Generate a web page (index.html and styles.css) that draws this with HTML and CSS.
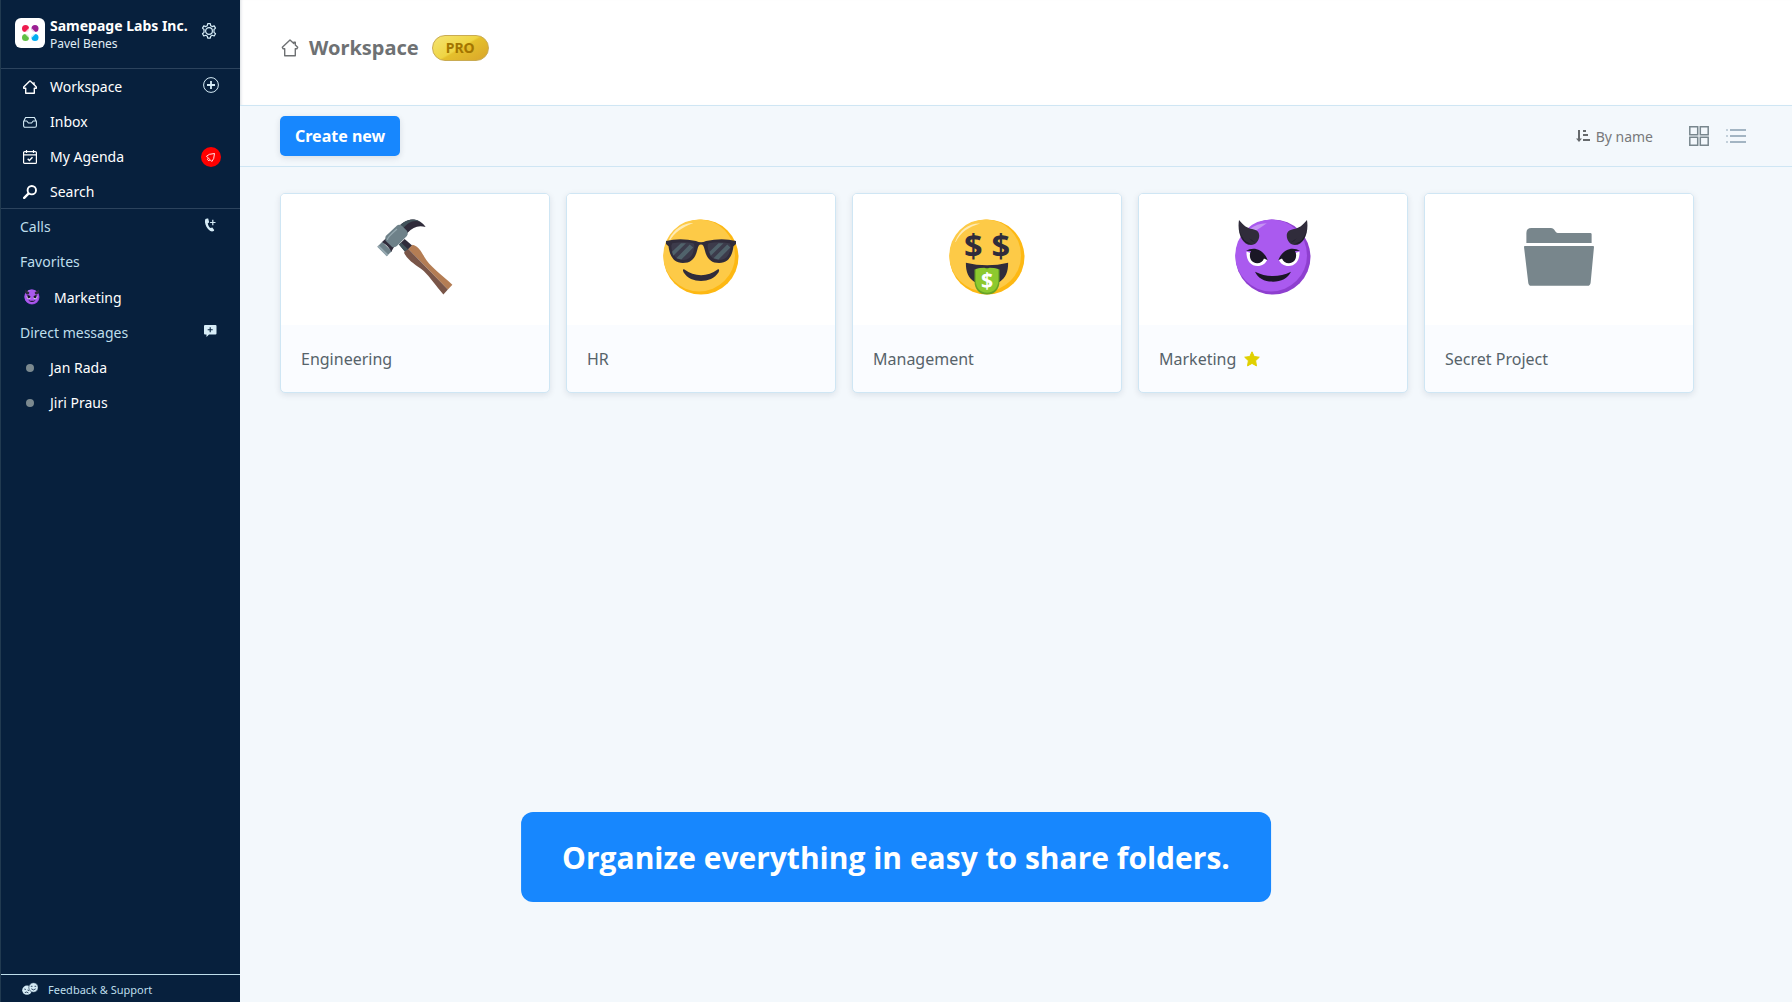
FILE: index.html
```html
<!DOCTYPE html>
<html lang="en">
<head>
    <meta charset="UTF-8">
    <meta name="viewport" content="width=device-width, initial-scale=1.0">
    <title>Samepage - Workspace</title>
    <link rel="stylesheet" href="styles.css">
</head>
<body>
    <aside class="sidebar">
        <div class="account">
            <div class="logo">
                <svg viewBox="0 0 30 30" width="30" height="30">
                    <circle cx="10.5" cy="10.5" r="3.5" fill="#ee1c4e"/>
                    <circle cx="20" cy="10.5" r="3.5" fill="#9c1f93"/>
                    <circle cx="10.5" cy="19.5" r="3.5" fill="#5fc044"/>
                    <circle cx="20" cy="19.5" r="3.5" fill="#00adf2"/>
                    <path d="M12 12l2-2v4h-4zM18.500 12l-2-2v4h4zM12 18l2 2v-4h-4zM18.500 18l-2 2v-4h4z" fill="#fff" opacity=".8"/>
                </svg>
            </div>
            <div class="account-names">
                <strong>Samepage Labs Inc.</strong>
                <span>Pavel Benes</span>
            </div>
            <button class="icon-btn" aria-label="Settings">
                <svg viewBox="0 0 16 16" width="16" height="16" fill="none" stroke="#d6ecf7" stroke-width="1.200" stroke-linejoin="round">
                    <path d="M6.700.7h2.600l.4 2 1.500.9 2-.7 1.300 2.200-1.500 1.400v2.900l1.500 1.400-1.300 2.200-2-.7-1.500.9-.4 2H6.700l-.4-2-1.500-.9-2 .7-1.300-2.200L3 9.400V6.500L1.500 5.100l1.300-2.200 2 .7 1.500-.9z"/>
                    <circle cx="8" cy="8" r="3.400"/>
                </svg>
            </button>
        </div>

        <nav class="menu">
            <div class="row">
                <a href="#">
                    <svg viewBox="0 0 14 14" width="14" height="14" fill="none" stroke="#fff" stroke-width="1.400" stroke-linejoin="round"><path d="M7 .8L.7 7v1.200h2v5h8.600v-5h2V7L11 4.600V2.300"/><path d="M7 .8l4.200 4"/></svg>
                    Workspace
                </a>
                <button class="icon-btn add" aria-label="Add to workspace">
                    <svg viewBox="0 0 16 16" width="16" height="16" fill="none" stroke="#d6ecf7"><circle cx="8" cy="8" r="7.400"/><path d="M8 4v8M4 8h8" stroke-width="1.800"/></svg>
                </button>
            </div>
            <div class="row">
                <a href="#">
                    <svg viewBox="0 0 14 14" width="14" height="14" fill="none" stroke="#d6ecf7" stroke-width="1.100" stroke-linejoin="round"><path d="M.6 6.500l2-4h8.800l2 4v4.300a1.400 1.400 0 0 1-1.400 1.400H2A1.400 1.400 0 0 1 .6 10.800zM.6 6h3.200l1.600 2h3.200l1.600-2h3.200"/></svg>
                    Inbox
                </a>
            </div>
            <div class="row">
                <a href="#">
                    <svg viewBox="0 0 14 14" width="14" height="14" fill="none" stroke="#fff" stroke-width="1.200"><rect x=".6" y="1.600" width="12.800" height="11.800" rx="1"/><path d="M.6 4.800h12.800M3.500 0v3M10.500 0v3"/><path d="M4.700 8.800l1.700 1.700 3.100-3.200" stroke-width="1.500"/></svg>
                    My Agenda
                </a>
                <span class="alert">
                    <svg viewBox="0 0 20 20" width="20" height="20" fill="none" stroke="#fff" stroke-width=".9" stroke-linejoin="round"><path d="M13.500 6.500l-5 .8-3 1.900 5.300 5.300 1.900-3z"/><path d="M6.700 11.500a1.500 1.500 0 0 0 2 2"/></svg>
                </span>
            </div>
            <div class="row">
                <a href="#">
                    <svg viewBox="0 0 14 14" width="14" height="14" fill="none" stroke="#fff" stroke-linecap="round"><circle cx="8.800" cy="5.200" r="4.200" stroke-width="1.900"/><path d="M5.400 8.600L1.200 12.800" stroke-width="2.400"/></svg>
                    Search
                </a>
            </div>
        </nav>

        <div class="groups">
            <div class="row group">
                <span>Calls</span>
                <button class="icon-btn" aria-label="New call">
                    <svg viewBox="0 0 14 14" width="14" height="14"><path d="M4.200.4L2.400 1C.6 5 4.500 12.500 9 13.600l1.800-.6.4-.9-1.900-2.600-1.800.5C6 9.200 4.900 6.900 4.800 5.200l1.400-.8L5.200.6z" fill="#d6ecf7"/><path d="M9.800 1.800v5.400M7.100 4.500h5.400" stroke="#d6ecf7" stroke-width="1.200"/></svg>
                </button>
            </div>
            <div class="row group">
                <span>Favorites</span>
            </div>
            <div class="row favorite">
                <a href="#">
                    <svg viewBox="0 0 64 64" width="16" height="16"><use href="#devil"/></svg>
                    Marketing
                </a>
            </div>
            <div class="row group">
                <span>Direct messages</span>
                <button class="icon-btn" aria-label="New message">
                    <svg viewBox="0 0 14 14" width="14" height="14"><path d="M2 1h10.500q1 0 1 1v7.500q0 1-1 1H6L3.500 13v-2.500H2q-1 0-1-1V2q0-1 1-1z" fill="#d6ecf7"/><path d="M7.200 3.200v5M4.700 5.700h5" stroke="#07203d" stroke-width="1.100"/></svg>
                </button>
            </div>
            <div class="row">
                <a href="#"><span class="status"></span>Jan Rada</a>
            </div>
            <div class="row">
                <a href="#"><span class="status"></span>Jiri Praus</a>
            </div>
        </div>

        <a class="support" href="#">
            <svg viewBox="0 0 16 14" width="16" height="14">
                <ellipse cx="5" cy="8.200" rx="4.800" ry="4.600" fill="#d6ecf7"/>
                <path d="M2.300 7l1.600.5M5.500 8l1.600.6M2.800 10.700q1.800-1.500 3.600.2" stroke="#07203d" fill="none" stroke-width=".8"/>
                <ellipse cx="11.500" cy="5.500" rx="4.700" ry="4.800" fill="#d6ecf7" stroke="#07203d" stroke-width=".6"/>
                <path d="M8.800 4.300h1.700M12.500 4.300h1.700M9.300 6.800q2.200 2.200 4.400 0" stroke="#07203d" fill="none" stroke-width=".8"/>
            </svg>
            Feedback &amp; Support
        </a>
    </aside>

    <main class="main">
        <header class="header">
            <svg viewBox="0 0 18 18" width="18" height="18" fill="none" stroke="#6e7173" stroke-width="1.400" stroke-linejoin="round"><path d="M9 1L1.300 8.300l.7 1.400h1.700v7.100h10.600V9.700H16l.7-1.400L14.300 6V3.200h-1.500v1.400z"/></svg>
            <h1>Workspace</h1>
            <span class="pro">PRO</span>
        </header>

        <div class="toolbar">
            <button class="create">Create new</button>
            <div class="view-options">
                <button class="sort">
                    <svg viewBox="0 0 14 12" width="14" height="12" fill="none" stroke="#65696c" stroke-width="2"><path d="M3 0v10M7 1h3M7 5h5M7 10h7"/><path d="M0 8.500h6L3 12z" fill="#65696c" stroke="none"/></svg>
                    By name
                </button>
                <button class="icon-btn" aria-label="Grid view">
                    <svg viewBox="0 0 20 20" width="20" height="20" fill="none" stroke="#78868d" stroke-width="1.500"><path d="M.8.8h7.900v7.900H.8zM11.300.8h7.900v7.900h-7.900zM.8 11.300h7.900v7.900H.8zM11.300 11.300h7.900v7.900h-7.900z"/></svg>
                </button>
                <button class="icon-btn" aria-label="List view">
                    <svg viewBox="0 0 20 20" width="20" height="20" fill="none" stroke="#a3b5c3" stroke-width="2"><path d="M4 4h16M4 10h16M4 16h16"/><path d="M0 4h2M0 10h2M0 16h2" opacity=".6"/></svg>
                </button>
            </div>
        </div>

        <section class="folders">
            <a class="card" href="#">
                <div class="picture">
                    <svg viewBox="0 0 64 64" width="80" height="80">
                        <path d="M1.900 23.700l3.900-4 7.600 7.600-4 4z" fill="#6e8189"/>
                        <path d="M1.900 23.700l1.200-1.200 7.500 7.500-1.200 1.300z" fill="#94a7af"/>
                        <path d="M5.600 20l3-2.800 6.600 6.800-2.300 4q-1.200-4-7.300-8z" fill="#302c3b"/>
                        <path d="M20 6.600C25 1.600 34-1 40.500 8 34.500 6.500 30.500 8 25.900 12.700z" fill="#302c3b"/>
                        <path d="M20 6.600C24.500 2 31.500.2 36.500 4 30.500 1.600 26.500 4.500 22.800 8.600z" fill="#42535b"/>
                        <path d="M19.200 21.900l4.500-4.300 6 5.200-5.400 5.400z" fill="#302c3b"/>
                        <path d="M19.200 21.900l1.600-1.600 5.600 5.500-2.100 2.200z" fill="#42535b"/>
                        <path d="M8.600 15.200l8.800-8.300q2-1.400 4.300.3l4 4q1 2-.2 4l-8 8q-1.800 1.400-3.600 1L8.500 19q-.8-2 .1-3.800z" fill="#6e8189"/>
                        <path d="M9.800 18.300q0-2 7.800-8.700" stroke="#94a7af" stroke-width="1" fill="none"/>
                        <path d="M30.100 22.100c5 1.500 7 5.400 9.400 9.900 3.800 7 14 14.500 22.400 22.100l-3.600 3.900L26.700 25.600z" fill="#b47d54"/>
                        <path d="M26.700 25.600l31.600 32.400-3.600 3.900C49 55.500 44 48 39 43.200c-6-5-11.500-7-15.600-14.200v-1z" fill="#795548"/>
                    </svg>
                </div>
                <div class="name">Engineering</div>
            </a>
            <a class="card" href="#">
                <div class="picture">
                    <svg viewBox="0 0 64 64" width="80" height="80">
                        <circle cx="32" cy="32" r="30" fill="#fdb813"/>
                        <ellipse cx="30.500" cy="30.700" rx="28.700" ry="28.800" fill="#fdca47"/>
                        <path d="M6.500 18C10 10 18 4.800 25.500 4.900 17 8 10.500 12.500 7 19z" fill="#feebb5"/>
                        <path d="M4 19.200q11-3 24 0 2 1 4 1t4-1q13-3 24 0v2.400l-2 1.700c-1 7-3.500 13.500-11.500 13.500-7 0-10-4-11.500-10.500-.8-3-1.300-4.300-3-4.300s-2.200 1.300-3 4.300C27.500 32.800 24.500 36.800 17.500 36.800 9.500 36.800 7 30.300 6 23.300l-2-1.700z" fill="#302c3b"/>
                        <path d="M9 21q9-1.800 16.800 0 1.500.6.500 5-1.300 8-8.500 8.300Q9 34.500 8.200 23zM55 21q-9-1.800-16.800 0-1.500.6-.5 5 1.300 8 8.500 8.300Q55 34.500 55.800 23z" fill="#3c3b4b"/>
                        <path d="M16 21h4L9.800 31l-1-3.300zM23 22l2.800 2.400-9.500 9.600-4-1zM46 21h4L39.800 31l-1-3.300zM53 22l2.500 2.400-9.500 9.600-4-1z" fill="#50626b"/>
                        <path d="M18.100 41.600q14 10 27.800 0 1.200.6.200 2.600C43 49 37.500 51.200 32 51.200S21 49 18 44.200q-1-2 .1-2.600z" fill="#302c3b"/>
                    </svg>
                </div>
                <div class="name">HR</div>
            </a>
            <a class="card" href="#">
                <div class="picture">
                    <svg viewBox="0 0 64 64" width="80" height="80">
                        <circle cx="32" cy="32" r="30" fill="#fdb813"/>
                        <ellipse cx="30.500" cy="30.700" rx="28.700" ry="28.800" fill="#fdca47"/>
                        <path d="M6.500 20C10 10 18 4.800 26.500 5.200 17 8 10.500 12.500 7 20z" fill="#feebb5"/>
                        <path d="M15.100 36.600q17 4 33.800 0C49 44 47 48.500 42 52H22c-5-3.500-7-8-6.900-15.400z" fill="#302c3b"/>
                        <path d="M22 42q4-1.500 10-1.200 6-.3 10 1.200v9.500c0 6-4 10.500-10 10.500s-10-4.500-10-10.500z" fill="#68a324"/>
                        <path d="M23 41.500q3.500-1 7-1l2 1.500 2-1.500q3.500 0 7 1v9c0 6-3.500 10-9 10s-9-4-9-10z" fill="#8dc92e"/>
                        <g font-weight="bold" text-anchor="middle">
                            <text x="21" y="33" font-size="26" fill="#302c3b">$</text>
                            <text x="43" y="33" font-size="26" fill="#302c3b">$</text>
                            <text x="32" y="56.500" font-size="17" fill="#fff">$</text>
                        </g>
                    </svg>
                </div>
                <div class="name">Management</div>
            </a>
            <a class="card" href="#">
                <div class="picture">
                    <svg viewBox="0 0 64 64" width="80" height="80">
                        <g id="devil">
                            <circle cx="32" cy="32" r="30" fill="#8e3fcf"/>
                            <ellipse cx="30.500" cy="30.700" rx="28.700" ry="28.800" fill="#aa5aef"/>
                            <path d="M13 10q6-5 14-5-4 3-9 6z" fill="#c592f4"/>
                            <path d="M4.800 2.300c4 4.700 6.500 6.500 10.500 7.300 4 .7 5.700 2.400 5.700 5.400 0 4-3 7.400-6.500 7.400C7 22.400 3.200 12 4.800 2.300zM59.200 2.300c-4 4.700-6.500 6.500-10.500 7.300-4 .7-5.700 2.400-5.700 5.400 0 4 3 7.400 6.500 7.400 7.500 0 11.300-10.400 9.700-20.100z" fill="#302c3b"/>
                            <path d="M4.800 10q3 10.500 9.500 11.300-6.500 1-9.500-11.300zM59.200 10q-3 10.500-9.500 11.300 6.500 1 9.500-11.300zM13 17q2 2.500 5 3.500M51 17q-2 2.500-5 3.500" fill="#1a1725"/>
                            <path d="M10.800 27.500c-.4 7 3.200 11.700 8.700 11.700 4 0 6.500-1.800 8-5.200zM53.200 27.500c.4 7-3.200 11.700-8.700 11.700-4 0-6.500-1.800-8-5.200z" fill="#fff"/>
                            <path d="M10.400 27c5.500-3 13.500-2.300 17.400 7.600l-3-1.500c-.8 2.500-3 3.900-5.500 3.900-3.600 0-5.800-3-5.800-6.200 0-1.600.3-2.700 1-3.600zM53.600 27c-5.500-3-13.500-2.300-17.400 7.600l3-1.500c.8 2.500 3 3.900 5.500 3.900 3.600 0 5.800-3 5.800-6.200 0-1.600-.3-2.700-1-3.600z" fill="#1a1725"/>
                            <path d="M17.600 43.700q14.400 7 28.800 0C44 49 38.500 51.700 32 51.700S20 49 17.600 43.700z" fill="#1a1725"/>
                        </g>
                    </svg>
                </div>
                <div class="name">
                    Marketing
                    <svg viewBox="0 0 16 16" width="16" height="16"><path d="M8 .8l2.200 4.700 5.100.7-3.700 3.500.9 5.200L8 12.400l-4.500 2.500.9-5.200L.7 6.200l5.100-.7z" fill="#e0d000" stroke="#e0d000" stroke-linejoin="round"/></svg>
                </div>
            </a>
            <a class="card" href="#">
                <div class="picture">
                    <svg viewBox="0 0 64 64" width="80" height="80" fill="#78868c">
                        <path d="M5.900 20.800v-8q0-4 4-4h15.600c3 0 3.500 4 5.500 4h26q1.100 0 1.100 1v7z"/>
                        <path d="M4.600 23.200h54.800q.6 0 .6.700L57.300 52.500q-.3 2.500-2.500 2.500H9.700q-2 0-2.300-2.500L4 23.900q0-.7.6-.7z"/>
                    </svg>
                </div>
                <div class="name">Secret Project</div>
            </a>
        </section>
    </main>

    <div class="banner">Organize everything in easy to share folders.</div>
</body>
</html>
```
FILE: styles.css
```css
* {
    margin: 0;
    padding: 0;
    box-sizing: border-box;
}

body {
    display: flex;
    min-height: 100vh;
    background-color: #f3f8fc;
    font-family: "Noto Sans", sans-serif;
    font-size: 14px;
}

a {
    color: inherit;
    text-decoration: none;
}

button {
    font-family: inherit;
    border: none;
    background: none;
    cursor: pointer;
}

svg {
    display: block;
    flex-shrink: 0;
}

/* Sidebar */
.sidebar {
    display: flex;
    flex-direction: column;
    width: 240px;
    flex-shrink: 0;
    background-color: #07203d;
    border-left: 1px solid #213a50;
    color: #fff;
}

.account {
    display: flex;
    align-items: flex-start;
    height: 69px;
    padding: 18px 23px 0 14px;
    border-bottom: 1px solid #2c435d;
}

.logo {
    width: 30px;
    height: 30px;
    margin-right: 5px;
    background-color: #fff;
    border-radius: 6px;
}

.account-names {
    display: flex;
    flex-direction: column;
    flex: 1;
    white-space: nowrap;
}

.account-names strong {
    line-height: 16px;
}

.account-names span {
    font-size: 12px;
    line-height: 20px;
    color: #e1eef6;
}

.account .icon-btn {
    padding-top: 5px;
}

.menu {
    border-bottom: 1px solid #2c435d;
    height: 140px;
}

.row {
    display: flex;
    align-items: center;
    justify-content: space-between;
    height: 35px;
    padding: 0 23px 0 22px;
}

.row a {
    display: flex;
    align-items: center;
    gap: 13px;
}

.row .add {
    margin-right: -2px;
    padding-bottom: 3px;
}

.row .alert {
    margin-right: -4px;
    background-color: #f00;
    border-radius: 50%;
}

.group {
    padding-left: 19px;
    color: #bedeeb;
}

.group .icon-btn {
    padding-bottom: 3px;
}

.favorite {
    height: 36px;
    padding-left: 23px;
}

.favorite a {
    gap: 14px;
}

.status {
    width: 8px;
    height: 8px;
    margin: 0 3px;
    border-radius: 50%;
    background-color: #7b898f;
}

.support {
    display: flex;
    align-items: center;
    gap: 10px;
    height: 28px;
    margin-top: auto;
    padding: 1px 21px 0;
    border-top: 1px solid #bedeeb;
    color: #bedeeb;
    font-size: 11px;
}

/* Main area */
.main {
    flex: 1;
}

.header {
    display: flex;
    align-items: center;
    height: 106px;
    padding: 0 41px 10px;
    background-color: #fff;
    border-bottom: 1px solid #cfe6f4;
    box-shadow: inset 3px 0 3px -2px rgba(7, 32, 61, 0.15);
    color: #6e7173;
}

.header h1 {
    margin: 0 13px 0 10px;
    font-size: 20px;
}

.pro {
    padding: 0 13px;
    border: 1px solid #c9ab52;
    border-radius: 13px;
    background: linear-gradient(150deg, #f5e472 0%, #efd544 48%, #e5c02c 52%, #d9a52a 100%);
    color: #a37500;
    font-size: 14px;
    font-weight: 700;
    line-height: 24px;
}

.toolbar {
    display: flex;
    align-items: center;
    justify-content: space-between;
    height: 61px;
    padding: 0 46px 0 40px;
    border-bottom: 1px solid #cfe6f4;
}

.create {
    height: 40px;
    padding: 0 15px;
    border-radius: 5px;
    background-color: #1787fe;
    box-shadow: 0 2px 6px rgba(7, 32, 61, 0.12);
    color: #fff;
    font-size: 16px;
    font-weight: 700;
}

.view-options {
    display: flex;
    align-items: center;
    gap: 17px;
}

.sort {
    display: flex;
    align-items: center;
    gap: 6px;
    margin-right: 19px;
    color: #78797b;
    font-size: 14px;
}

.folders {
    display: grid;
    grid-template-columns: repeat(auto-fill, 270px);
    gap: 16px;
    padding: 26px 40px;
}

.card {
    overflow: hidden;
    border: 1px solid #cfe6f4;
    border-radius: 5px;
    background-color: #fafcff;
    box-shadow: 0 2px 6px rgba(7, 32, 61, 0.1);
}

.picture {
    display: flex;
    justify-content: center;
    height: 131px;
    padding-top: 23px;
    background-color: #fff;
}

.name {
    display: flex;
    align-items: center;
    gap: 8px;
    height: 67px;
    padding: 0 20px;
    color: #56636a;
    font-size: 16px;
}

/* Caption over the page */
.banner {
    position: fixed;
    bottom: 100px;
    left: 50%;
    transform: translateX(-50%);
    padding: 2px 41px 0;
    border-radius: 12px;
    background-color: #1787fe;
    color: #fff;
    font-family: "Open Sans", sans-serif;
    font-size: 30px;
    font-weight: 700;
    line-height: 88px;
    white-space: nowrap;
}
```
